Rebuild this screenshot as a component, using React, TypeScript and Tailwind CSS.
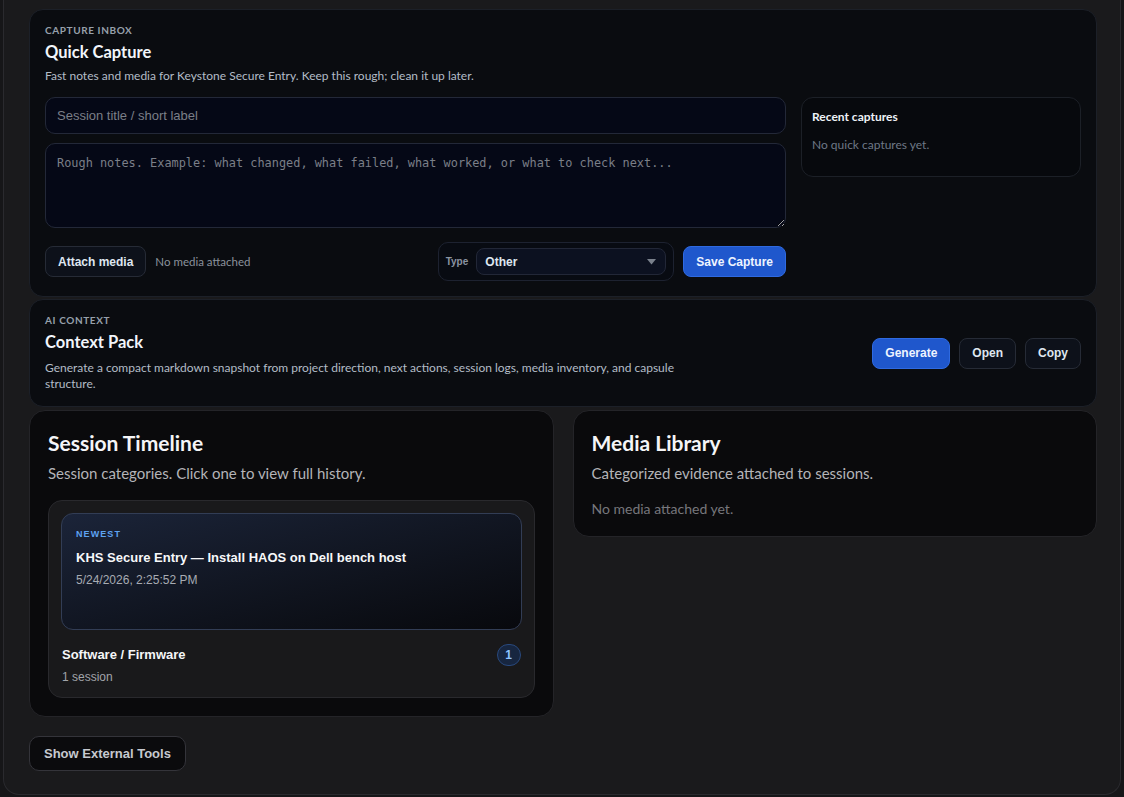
const ui = "font-['Lato','Open_Sans',sans-serif]";
const arial = "font-['Liberation_Sans',Arial,sans-serif]";

function GhostButton({ label }: { label: string }) {
  return (
    <button
      className={`${arial} h-[31px] rounded-[8px] border border-[#262b36] bg-[#0d111a] px-3 text-[12px] font-bold text-[#dfe6f0]`}
    >
      {label}
    </button>
  );
}

function BlueButton({ label }: { label: string }) {
  return (
    <button
      className={`${arial} h-[31px] rounded-[8px] border border-[#2f6ae0] bg-[#1f57cc] px-[12px] text-[12px] font-bold text-[#eef4ff]`}
    >
      {label}
    </button>
  );
}

function QuickCapture() {
  return (
    <section className="rounded-[14px] border border-[#1c2028] bg-[#0a0c10] px-[15px] pt-[14px] pb-[15px]">
      <div className={`${ui} text-[10px] leading-[12px] font-bold tracking-[0.06em] text-[#97a0ab]`}>CAPTURE INBOX</div>
      <h2 className={`${ui} mt-[6px] text-[16.5px] leading-[21px] font-bold text-[#f2f6fb]`}>Quick Capture</h2>
      <p className={`${ui} mt-[5px] text-[12px] leading-[16px] text-[#b3bcc7]`}>
        Fast notes and media for Keystone Secure Entry. Keep this rough; clean it up later.
      </p>
      <div className="mt-[13px] grid grid-cols-[1fr_280px] gap-[15px]">
        <div className="flex flex-col">
          <input
            placeholder="Session title / short label"
            className={`${arial} h-[37px] rounded-[10px] border border-[#232838] bg-[#050816] px-[11px] text-[13px] text-[#e5e7eb] outline-none placeholder:text-[#7b7f88]`}
          />
          <textarea
            placeholder="Rough notes. Example: what changed, what failed, what worked, or what to check next..."
            className="mt-[9px] block h-[85px] rounded-[10px] border border-[#232838] bg-[#050816] px-[11px] pt-[12px] font-['DejaVu_Sans_Mono',monospace] text-[11.9px] leading-[15px] text-[#e5e7eb] outline-none placeholder:text-[#7b7f88]"
          />
          <div className="mt-[14px] flex items-center justify-between">
            <div className="flex items-center gap-[9px]">
              <GhostButton label="Attach media" />
              <span className={`${ui} text-[11.5px] text-[#8a929c]`}>No media attached</span>
            </div>
            <div className="flex items-center gap-[9px]">
              <div className="flex h-[39px] items-center gap-[8px] rounded-[10px] border border-[#1d2230] bg-[#080b12] pr-[7px] pl-[7px]">
                <span className={`${arial} text-[10px] font-bold text-[#8b94a1]`}>Type</span>
                <div className="flex h-[27px] w-[190px] items-center justify-between rounded-[8px] border border-[#222737] bg-[#0c1120] pl-[8px] pr-[9px]">
                  <span className={`${arial} text-[12px] font-bold text-[#dfe6f0]`}>Other</span>
                  <svg width="9" height="6" viewBox="0 0 9 6">
                    <path d="M0 0h9L4.5 5.5z" fill="#7a818c" />
                  </svg>
                </div>
              </div>
              <BlueButton label="Save Capture" />
            </div>
          </div>
        </div>
        <div className="h-[80px] rounded-[12px] border border-[#1c2027] bg-[#07090d] px-[10px] pt-[11px]">
          <div className={`${ui} text-[12px] leading-[16px] font-bold text-[#eef2f7]`}>Recent captures</div>
          <div className={`${ui} mt-[12px] text-[12px] leading-[16px] text-[#6e7886]`}>No quick captures yet.</div>
        </div>
      </div>
    </section>
  );
}

function ContextPack() {
  return (
    <section className="mt-[2px] flex items-center justify-between rounded-[14px] border border-[#1c2028] bg-[#0a0c10] px-[15px] pt-[14px] pb-[14px]">
      <div className="max-w-[660px]">
        <div className={`${ui} text-[10px] leading-[12px] font-bold tracking-[0.06em] text-[#97a0ab]`}>AI CONTEXT</div>
        <h2 className={`${ui} mt-[6px] text-[16.5px] leading-[21px] font-bold text-[#f2f6fb]`}>Context Pack</h2>
        <p className={`${ui} mt-[7px] text-[12px] leading-[16px] text-[#b3bcc7]`}>
          Generate a compact markdown snapshot from project direction, next actions, session logs, media inventory, and capsule structure.
        </p>
      </div>
      <div className="flex items-center gap-[9px]">
        <BlueButton label="Generate" />
        <GhostButton label="Open" />
        <GhostButton label="Copy" />
      </div>
    </section>
  );
}

function SessionTimeline() {
  return (
    <section className="rounded-[16px] border border-[#242428] bg-[#0a0a0c] px-[18px] pt-[19px] pb-[18px]">
      <h2 className={`${ui} text-[21px] leading-[26px] font-bold text-[#f5f5f7]`}>Session Timeline</h2>
      <p className={`${ui} mt-[7px] text-[15px] leading-[20px] text-[#b4b4b8]`}>
        Session categories. Click one to view full history.
      </p>
      <div className="mt-[17px] rounded-[14px] border border-[#29292d] bg-[#19191b] p-[12px]">
        <div className="h-[117px] rounded-[12px] border border-[#323d55] bg-gradient-to-br from-[#1b2439] to-[#08090d] px-[14px] pt-[14px]">
          <div className={`${arial} text-[9px] leading-[12px] font-bold tracking-[0.12em] text-[#5ea3f2]`}>NEWEST</div>
          <div className={`${arial} mt-[10px] text-[13px] leading-[16px] font-bold text-[#f7f8fa]`}>
            KHS Secure Entry — Install HAOS on Dell bench host
          </div>
          <div className={`${arial} mt-[7px] text-[12px] leading-[15px] text-[#a7abb3]`}>5/24/2026, 2:25:52 PM</div>
        </div>
        <div className="mt-[14px] flex items-center justify-between px-[1px]">
          <div className={`${arial} text-[13px] leading-[16px] font-bold text-[#f5f6f8]`}>Software / Firmware</div>
          <div className={`${arial} flex h-[22px] w-[24px] items-center justify-center rounded-full border border-[#29497d] bg-[#172640] text-[12px] font-bold text-[#8fc2ff]`}>
            1
          </div>
        </div>
        <div className={`${arial} mt-[4px] px-[1px] text-[12px] leading-[15px] text-[#a1a4aa]`}>1 session</div>
      </div>
    </section>
  );
}

function MediaLibrary() {
  return (
    <section className="rounded-[16px] border border-[#242428] bg-[#0a0a0c] px-[18px] pt-[19px] pb-[17px]">
      <h2 className={`${ui} text-[21px] leading-[26px] font-bold text-[#f5f5f7]`}>Media Library</h2>
      <p className={`${ui} mt-[7px] text-[15px] leading-[20px] text-[#b4b4b8]`}>
        Categorized evidence attached to sessions.
      </p>
      <p className={`${ui} mt-[16px] text-[14px] leading-[20px] text-[#77777c]`}>No media attached yet.</p>
    </section>
  );
}

export default function App() {
  return (
    <main className="min-h-screen bg-[#161618] px-[3px] pb-[4px]">
      <div className="rounded-b-[16px] border-x border-b border-[#2a2a2e] bg-[#1a1a1c] pt-[9px] pr-[23px] pb-[23px] pl-[25px]">
        <QuickCapture />
        <ContextPack />
        <div className="mt-[3px] grid grid-cols-2 items-start gap-[19px]">
          <SessionTimeline />
          <MediaLibrary />
        </div>
        <button
          className={`${arial} mt-[19px] h-[35px] rounded-[10px] border border-[#34343a] bg-[#0b0b0d] px-[14px] text-[13px] font-bold text-[#c6c9cf]`}
        >
          Show External Tools
        </button>
      </div>
    </main>
  );
}
